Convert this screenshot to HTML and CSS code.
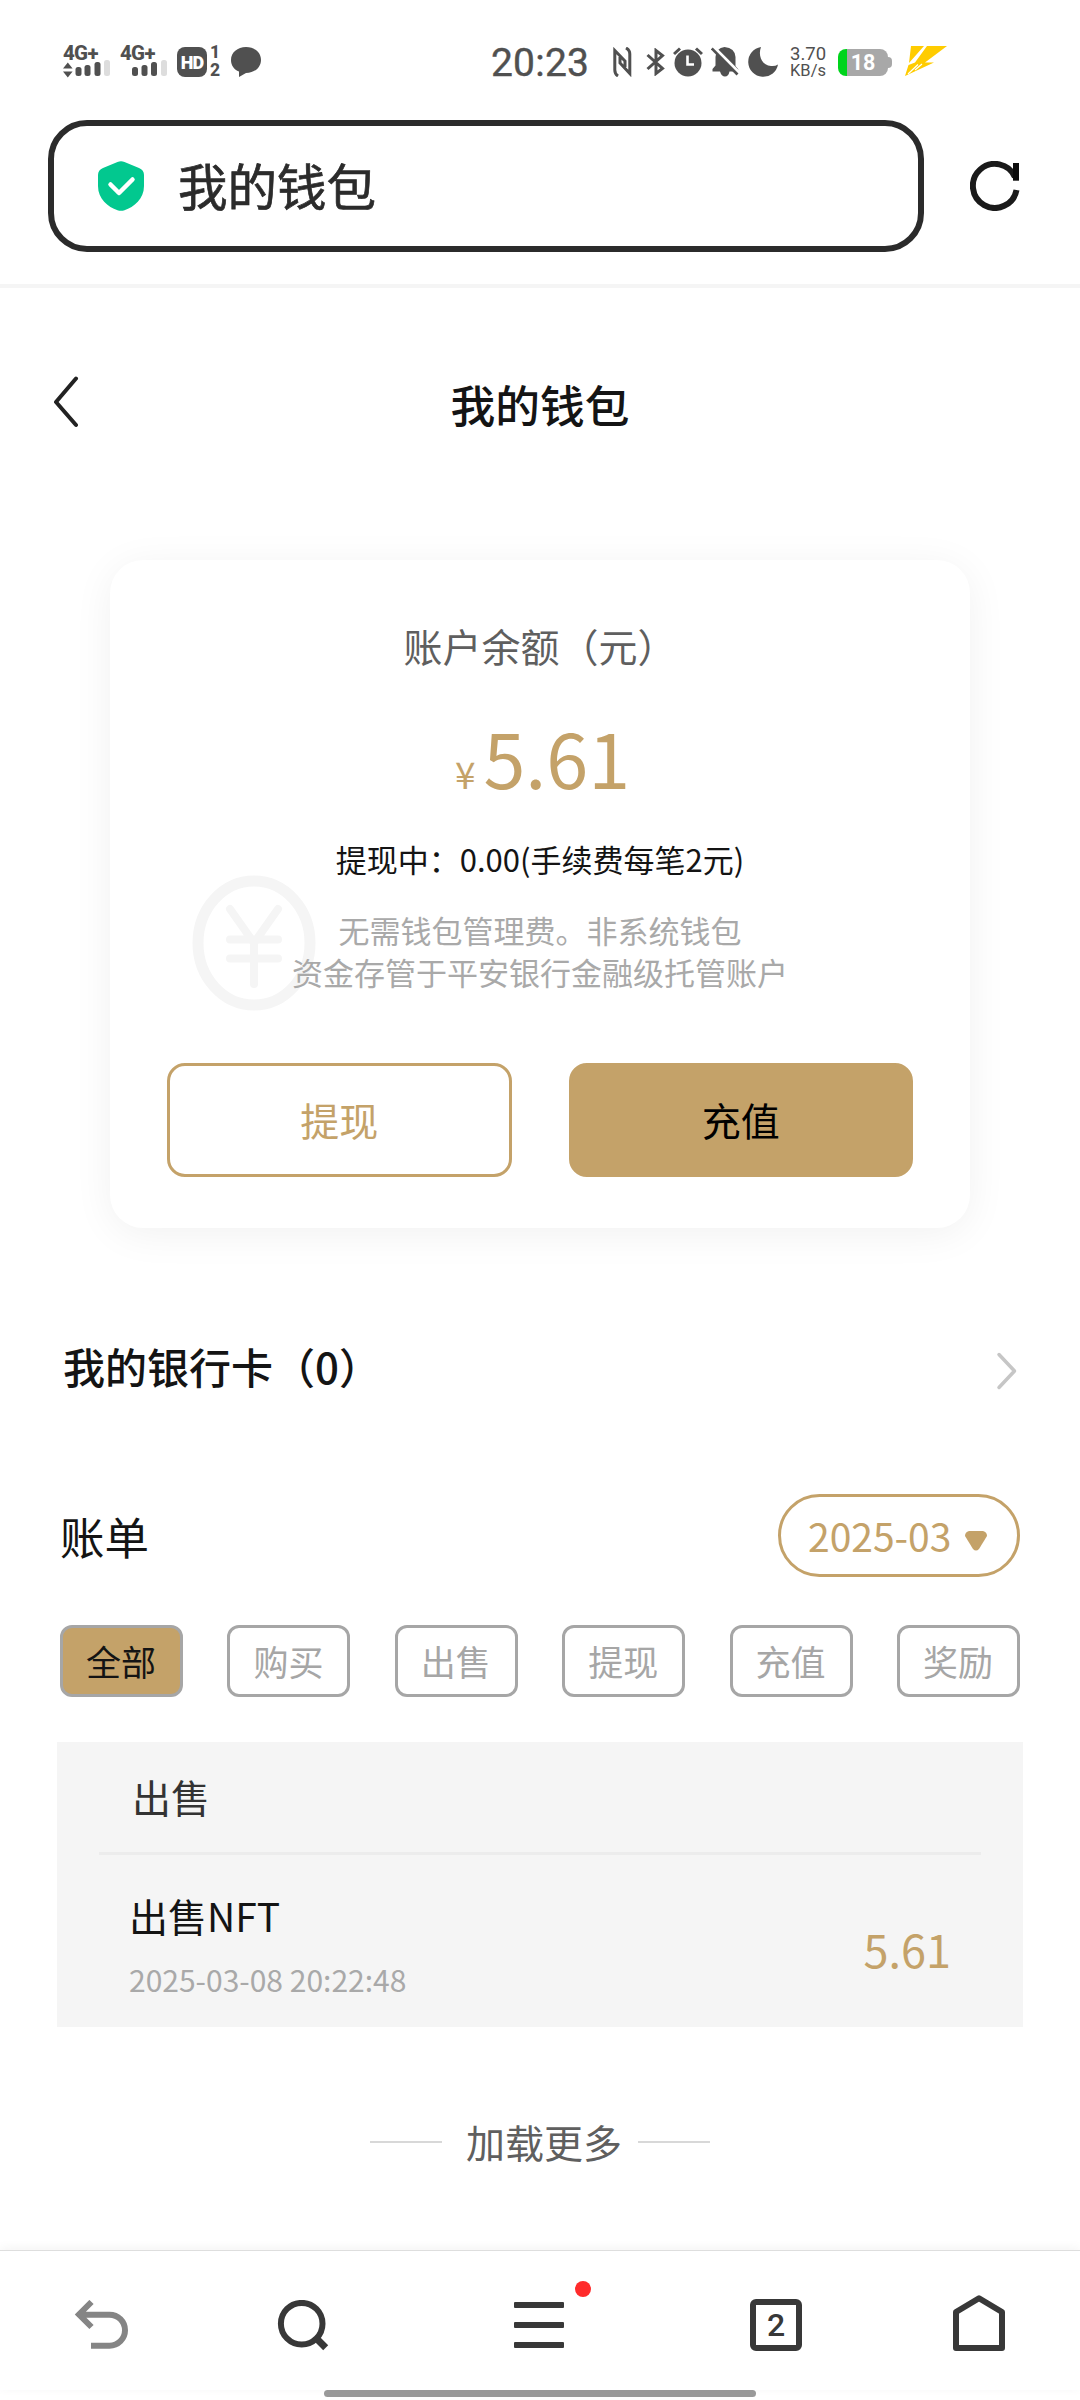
FILE: index.html
```html
<!DOCTYPE html>
<html lang="zh-CN">
<head>
<meta charset="utf-8">
<title>我的钱包</title>
<link rel="stylesheet" href="styles.css">
</head>
<body>
<div class="screen">
  <header class="status">
    <div class="signal">
      <span class="net">4G+</span>
      <svg width="48" height="20" viewBox="0 0 48 20"><path d="M0 8.500l4.800-6 4.800 6zM0 11.500h9.600l-4.800 6z" fill="#505050"/><g fill="#505050"><rect x="12.500" y="7" width="6" height="9" rx="2.500"/><rect x="21.500" y="5" width="6" height="11" rx="2.500"/><rect x="31.500" y="2" width="6" height="14" rx="2.500"/></g><rect x="41" y="0" width="6" height="16" rx="2.500" fill="#ddd"/></svg>
    </div>
    <div class="signal second">
      <span class="net">4G+</span>
      <svg width="48" height="20" viewBox="0 0 48 20"><g fill="#505050"><rect x="12" y="7" width="6" height="9" rx="2.500"/><rect x="21.500" y="5" width="6" height="11" rx="2.500"/><rect x="31" y="2" width="6" height="14" rx="2.500"/></g><rect x="41" y="0" width="6" height="16" rx="2.500" fill="#ddd"/></svg>
    </div>
    <span class="hd">HD</span>
    <span class="sims"><span>1</span><span>2</span></span>
    <svg class="bubble" width="30" height="30" viewBox="0 0 30 30"><path d="M15 0C23.500 0 30 5.500 30 13S23.500 26 15 26l-7 4V24.500C3 22.500 0 18.500 0 13 0 5.500 6.500 0 15 0z" fill="#505050"/></svg>
    <time class="clock">20:23</time>
    <svg class="nfc" width="19" height="30" viewBox="0 0 19 30" fill="none" stroke="#505050" stroke-width="3"><path d="M5 29Q1.800 27 1.800 23V3.500L12 14v6M13 1q3.800 2 3.800 6V26.500L7 16V10"/></svg>
    <svg class="bt" width="19" height="28" viewBox="0 0 19 28" fill="none" stroke="#505050" stroke-width="3"><path d="M1.500 7L16.500 20.500l-6.500 5V2.500l6.500 5L1.500 21"/></svg>
    <svg class="alarm" width="30" height="30" viewBox="0 0 30 30"><circle cx="15" cy="16" r="13.500" fill="#505050"/><path d="M1 7l6-5.500M29 7l-6-5.500" stroke="#505050" stroke-width="3"/><path d="M14.500 8.500v9h6.500" fill="none" stroke="#fff" stroke-width="2.600"/></svg>
    <svg class="bell" width="28" height="30" viewBox="0 0 28 30"><path d="M4.500 24.500H1.500V22l3-3.500V10Q5 1 13.500 0 24 1 24.500 10v9l3 3.500-4 2h-5q-1 5-4.500 5t-5-5z" fill="#505050"/><path d="M2 0L28 26" stroke="#fff" stroke-width="4"/><path d="M.8 1.500L26.500 27.500" stroke="#505050" stroke-width="2.600"/></svg>
    <svg class="moon" width="30" height="30" viewBox="0 0 30 30"><path d="M13 0A15 15 0 1 0 30 17.500Q27 19.500 23 19C13 18 10 8 13 0z" fill="#505050"/></svg>
    <span class="speed"><span>3.70</span><span>KB/s</span></span>
    <span class="battery">18</span>
    <svg class="bolt" width="43" height="31" viewBox="0 0 43 31"><path d="M7 0H20L5 17zM23 0H43L21 16.500H30L1 30 4.500 19 11 16.500z" fill="#fc0"/><path d="M4 28L14 18.500M11 24L18 18" stroke="#fff" stroke-width="1.200"/></svg>
  </header>

  <div class="browser">
    <div class="address">
      <svg width="46" height="50" viewBox="0 0 46 50"><path d="M19.500 1Q23 -.6 26.500 1L41 7Q46 9 46 14V25C46 38 36 46 26.500 49.300q-3.500 1-7 0C10 46 0 38 0 25V14Q0 9 5 7z" fill="#02c88f"/><path d="M12.500 23.500l8.500 8.500L34.500 18.500" fill="none" stroke="#fff" stroke-width="4.500" stroke-linecap="round" stroke-linejoin="round"/></svg>
      <span>我的钱包</span>
    </div>
    <svg class="refresh" width="50" height="50" viewBox="0 0 50 50" fill="none" stroke="#1a1a1a" stroke-width="6"><path d="M46.500 29A22 22 0 1 1 45 16"/><path d="M46 2V19.700" stroke="#0c0c0c"/></svg>
  </div>

  <div class="titlebar">
    <svg width="26" height="52" viewBox="0 0 26 52" fill="none" stroke="#222" stroke-width="4" stroke-linecap="round" stroke-linejoin="round"><path d="M23 2.500L3 26l20 23"/></svg>
    <h1>我的钱包</h1>
  </div>

  <main>
    <section class="card">
      <svg class="watermark" width="124" height="136" viewBox="0 0 124 136" fill="none" stroke="#f5f5f5"><ellipse cx="62" cy="68" rx="56" ry="62" stroke-width="11"/><path d="M38 34l24 34 24-34M62 65v44M38 64.500h48M38 83.500h48" stroke-width="8" stroke-linecap="round" stroke-linejoin="round"/></svg>
      <h2>账户余额（元）</h2>
      <p class="balance"><small>¥</small>5.61</p>
      <p class="pending">提现中：0.00(手续费每笔2元)</p>
      <p class="note">无需钱包管理费。非系统钱包<br>资金存管于平安银行金融级托管账户</p>
      <div class="actions">
        <button class="outline">提现</button>
        <button class="solid">充值</button>
      </div>
    </section>

    <a class="bank">
      <span>我的银行卡（0）</span>
      <svg width="22" height="40" viewBox="0 0 22 40" fill="none" stroke="#c6c6c6" stroke-width="3.500" stroke-linecap="round" stroke-linejoin="round"><path d="M3 3.500L18.500 20 3 36.500"/></svg>
    </a>

    <div class="billhead">
      <h2>账单</h2>
      <div class="month">2025-03<svg width="22" height="20" viewBox="0 0 22 20"><path d="M4 0H18Q22 1 22 5L14 18q-3 3-6 0L0 5Q0 1 4 0z" fill="#c4a269"/></svg></div>
    </div>

    <nav class="filters">
      <span class="active">全部</span><span>购买</span><span>出售</span><span>提现</span><span>充值</span><span>奖励</span>
    </nav>

    <section class="bill">
      <h3>出售</h3>
      <div class="entry">
        <div>
          <p class="name">出售NFT</p>
          <p class="date">2025-03-08 20:22:48</p>
        </div>
        <span class="amount">5.61</span>
      </div>
    </section>

    <div class="more"><span>加载更多</span></div>
  </main>

  <footer class="toolbar">
    <svg class="undo" width="54" height="52" viewBox="0 0 54 52" fill="none" stroke="#858585" stroke-width="6"><path d="M17.500 2L5 14.500 17.500 27M6 14.700H35.500a15.500 15.500 0 0 1 0 31H17"/></svg>
    <svg class="search" width="52" height="52" viewBox="0 0 52 52" fill="none" stroke="#383838" stroke-width="6"><circle cx="24.700" cy="23.700" r="20.800"/><path d="M39 38l9.700 9.700" stroke-width="7"/></svg>
    <span class="menu"><svg width="50" height="46" viewBox="0 0 50 46" fill="#383838"><rect width="50" height="6" rx="1"/><rect y="20" width="50" height="6" rx="1"/><rect y="40" width="50" height="6" rx="1"/></svg><i></i></span>
    <span class="tabs">2</span>
    <svg class="home" width="52" height="56" viewBox="0 0 52 56" fill="none" stroke="#383838" stroke-width="6" stroke-linejoin="round"><path d="M3 17L26 3.200 49 17V53H3z"/></svg>
  </footer>
  <div class="handle"></div>
</div>
</body>
</html>
```
FILE: styles.css
```css
* { box-sizing: border-box; margin: 0; padding: 0; }
body {
  width: 1080px;
  background: #fff;
  color: #141414;
  font-family: "Noto Sans CJK SC", sans-serif;
}
svg { display: block; flex: none; }
.screen { display: flex; flex-direction: column; height: 2400px; overflow: hidden; }

.status {
  display: flex;
  align-items: flex-start;
  height: 120px;
  padding: 47px 0 0 63px;
  color: #505050;
  font-family: Roboto, "Noto Sans CJK SC", sans-serif;
}
.signal { width: 48px; margin-top: -3px; }
.second { margin-left: 9px; }
.net { display: block; height: 16px; font-size: 20.500px; font-weight: 800; line-height: 18px; letter-spacing: -.7px; }
.hd {
  width: 30px; height: 30px; margin-left: 9px;
  border-radius: 8px; background: #505050; color: #fff;
  font-size: 18px; font-weight: 900; line-height: 31px; letter-spacing: -1px; text-align: center;
}
.sims { display: flex; flex-direction: column; width: 12px; margin: -3px 0 0 2px; font-size: 17.500px; font-weight: 800; line-height: 17.500px; text-align: center; }
.bubble { margin-left: 10px; }
.clock { width: 98px; margin: -4px 0 0 230px; font-size: 39px; line-height: 40px; letter-spacing: .2px; -webkit-text-stroke: .4px #505050; }
.nfc { margin-left: 24px; }
.bt { margin: 1px 0 0 14px; }
.alarm { margin-left: 8px; }
.bell { margin-left: 8px; }
.moon { margin-left: 9px; }
.speed { display: flex; flex-direction: column; width: 36px; margin-left: 12px; font-size: 18.500px; line-height: 15.500px; white-space: nowrap; }
.speed span + span { font-size: 16.500px; }
.battery {
  position: relative;
  width: 50px; height: 27px; margin: 2px 0 0 12px;
  border-radius: 8px;
  background: linear-gradient(90deg, #00d41c 9px, #a8a8a8 9px);
  color: #fff; font-size: 21.500px; font-weight: 700; line-height: 28px; text-align: center;
}
.battery::after { content: ""; position: absolute; left: 50px; top: 8px; width: 4px; height: 11px; border-radius: 0 4px 4px 0; background: #a8a8a8; }
.bolt { margin: -1px 0 0 16px; }

.browser {
  display: flex;
  align-items: flex-start;
  height: 168px;
  padding-left: 48px;
  border-bottom: 4px solid #f5f5f5;
}
.address {
  display: flex; align-items: center; gap: 34px;
  width: 876px; height: 132px; padding-left: 44px;
  border: 6px solid #2b2b2b; border-radius: 39px;
  color: #2b2b2b; font-size: 49.500px; line-height: 70px;
  -webkit-text-stroke: .7px #2b2b2b;
}
.address span { margin-top: -3px; }
.refresh { margin: 41px 0 0 46px; }

.titlebar { display: flex; align-items: flex-start; height: 272px; padding: 88px 0 0 53px; }
.titlebar h1 { flex: 1; margin: -4px 79px 0 0; font-size: 44.700px; font-weight: 500; line-height: 64px; text-align: center; }

main { flex: 1; }
.card {
  position: relative;
  width: 860px; height: 668px; margin: 0 auto; padding: 59px 57px 0;
  border-radius: 33px; background: #fff;
  box-shadow: 0 6px 40px rgba(0, 0, 0, .06);
  text-align: center;
}
.card > * { position: relative; }
.card .watermark { position: absolute; left: 82px; top: 315px; }
.card h2 { color: #5f5f5f; font-size: 39px; font-weight: 400; line-height: 52px; }
.balance { height: 110px; margin-top: 30px; padding-left: 5px; color: #c4a269; font-size: 75.500px; line-height: 110px; }
.balance small { margin-right: 8px; font-size: 37px; line-height: 1; }
.pending { margin-top: 27px; font-size: 31px; line-height: 42px; }
.note { margin-top: 29px; color: #a9a9a9; font-size: 31px; line-height: 42px; }
.actions { display: flex; gap: 57px; margin-top: 70px; }
.actions button { flex: 1; height: 114px; border: 3px solid #c4a269; border-radius: 18px; font: 39px/106px "Noto Sans CJK SC", sans-serif; padding-bottom: 2px; }
.outline { background: #fff; color: #c4a269; }
.solid { background: #c4a269; color: #000; }

.bank { display: flex; align-items: center; justify-content: space-between; margin: 105px 62px 0 63px; height: 64px; font-size: 42px; font-weight: 500; }
.bank svg { margin-top: 11px; }
.billhead { display: flex; align-items: center; justify-content: space-between; height: 83px; margin: 97px 60px 0; }
.billhead h2 { font-size: 44.500px; font-weight: 400; }
.month { display: flex; align-items: center; gap: 14px; width: 242px; height: 83px; padding: 0 0 2px 27px; border: 3px solid #c4a269; border-radius: 42px; color: #c4a269; font-size: 39px; }
.month svg { margin-top: 12px; }

.filters { display: flex; justify-content: space-between; margin: 48px 60px 0; }
.filters span { width: 123px; height: 72px; padding-right: 1px; border: 3px solid #a6a6a6; border-radius: 12px; color: #a6a6a6; font-size: 35px; line-height: 66px; text-align: center; }
.filters .active { background: #c4a269; color: #141414; }

.bill { height: 285px; margin: 45px 57px 0; padding: 0 42px; background: #f5f5f5; }
.bill h3 { height: 113px; padding-left: 33px; border-bottom: 3px solid #ececec; color: #333; font-size: 39px; font-weight: 400; line-height: 108px; }
.entry { display: flex; justify-content: space-between; padding: 30px 30px 0 30px; }
.name { font-size: 39px; line-height: 60px; }
.date { margin-top: 6px; color: #a9a9a9; font-size: 30px; line-height: 56px; }
.amount { padding-top: 32px; color: #c4a269; font-size: 45px; line-height: 64px; }

.more { display: flex; align-items: center; justify-content: center; gap: 16px; height: 60px; margin-top: 85px; color: #5f5f5f; font-size: 39px; }
.more::before, .more::after { content: ""; width: 72px; height: 2px; background: #d8d8d8; }
.more span { padding: 0 0 2px 8px; }

.toolbar { display: flex; align-items: flex-start; height: 140px; padding: 49px 0 0 74px; border-top: 1px solid #dedede; background: #fff; box-shadow: 0 -2px 10px rgba(0, 0, 0, .05); }
.search { margin-left: 149px; }
.menu { position: relative; margin: 2px 0 0 185px; }
.menu i { position: absolute; left: 61px; top: -21px; width: 16px; height: 16px; border-radius: 50%; background: #ff2b2b; }
.tabs { width: 52px; height: 52px; margin: -1px 0 0 186px; border: 6px solid #383838; border-radius: 6px; color: #383838; font: 500 32px/40px Roboto, sans-serif; text-align: center; }
.home { margin: -5px 0 0 151px; }
.handle { flex: none; width: 432px; height: 7px; margin: 0 auto 3px; border-radius: 4px; background: #999; }
```
